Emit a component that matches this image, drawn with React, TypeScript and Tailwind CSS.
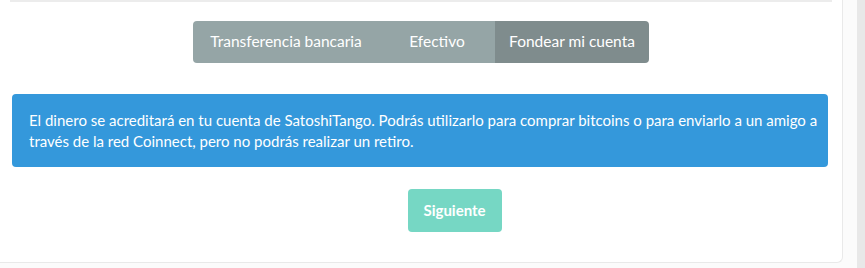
export default function App() {
  const tabs = [
    { label: 'Transferencia bancaria', active: false, w: 'w-[186px]' },
    { label: 'Efectivo', active: false, w: 'w-[116px]' },
    { label: 'Fondear mi cuenta', active: true, w: 'w-[154px]' },
  ];

  return (
    <div className="flex h-[268px] w-[865px] bg-[#fbfbfb] font-['Lato',sans-serif]">
      <div className="h-[263px] w-[843px] shrink-0 rounded-br-[6px] border-r border-b border-[#e9e9e9] bg-white">
        <div className="mx-[10px] h-[2px] bg-[#ececec]" />

        <div className="mt-[19px] flex justify-center">
          <div className="flex h-[42px] overflow-hidden rounded-[4px]">
            {tabs.map((t) => (
              <button
                key={t.label}
                className={
                  t.active
                    ? `${t.w} bg-[#7f8c8d] text-[15.5px] text-white`
                    : `${t.w} bg-[#95a5a6] text-[15.5px] text-white`
                }
              >
                {t.label}
              </button>
            ))}
          </div>
        </div>

        <div className="mx-[12px] mr-[14px] mt-[31px] rounded-[4px] bg-[#3498db] pt-[16px] pb-[15px] pl-[17px] pr-[8px] text-[15px] leading-[21px] text-white">
          El dinero se acreditará en tu cuenta de SatoshiTango. Podrás utilizarlo para comprar bitcoins o para enviarlo a un amigo a
          través de la red Coinnect, pero no podrás realizar un retiro.
        </div>

        <div className="mt-[22px] flex justify-center pl-[67px]">
          <button className="h-[43px] w-[94px] rounded-[4px] bg-[#76d7c4] text-[15px] font-bold text-white">
            Siguiente
          </button>
        </div>
      </div>
      <div className="flex-1" />
      <div className="w-[8px] bg-[#e8e8e8]" />
    </div>
  );
}
